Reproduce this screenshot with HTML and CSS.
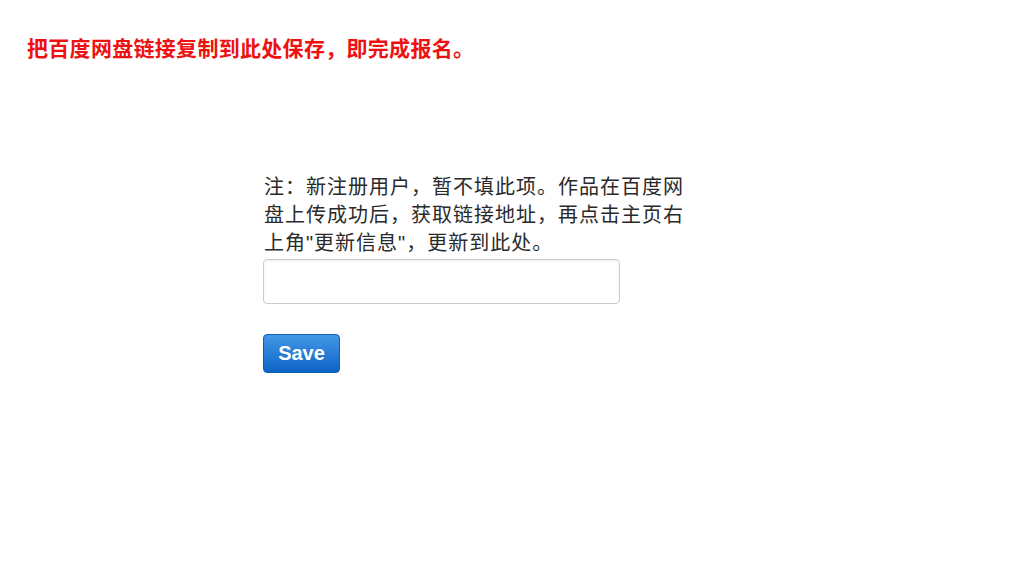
FILE: index.html
```html
<!DOCTYPE html>
<html lang="zh-CN">
<head>
    <meta charset="UTF-8">
    <meta name="viewport" content="width=device-width, initial-scale=1.0">
    <title>报名</title>
    <link rel="stylesheet" href="styles.css">
</head>
<body>
    <h1 class="notice">把百度网盘链接复制到此处保存，即完成报名。</h1>
    <div class="form-box">
        <p class="hint">注：新注册用户，暂不填此项。作品在百度网盘上传成功后，获取链接地址，再点击主页右上角"更新信息"，更新到此处。</p>
        <input type="text" class="link-input">
        <div class="actions">
            <button class="btn-save">Save</button>
        </div>
    </div>
</body>
</html>
```

FILE: styles.css
```css
body {
    margin: 0;
    padding: 0;
    background-color: #ffffff;
    font-family: "Liberation Sans", Arial, "Noto Sans CJK SC", sans-serif;
}
.notice {
    margin: 0;
    padding: 37px 0 0 27px;
    font-size: 21px;
    line-height: 24px;
    font-weight: bold;
    color: #ee1111;
    letter-spacing: 0.3px;
}
.form-box {
    width: 430px;
    margin: 112px 0 0 264px;
}
.hint {
    margin: 0;
    font-size: 20px;
    line-height: 28px;
    color: #2a2a2a;
    letter-spacing: 1px;
}
.link-input {
    display: block;
    width: 357px;
    height: 45px;
    margin-top: 2px;
    margin-left: -1px;
    border: 1px solid #cccccc;
    border-radius: 4px;
    box-shadow: inset 0 1px 2px rgba(0,0,0,0.08);
    box-sizing: border-box;
}
.actions {
    margin-top: 30px;
}
.btn-save {
    margin-left: -1px;
    width: 77px;
    height: 39px;
    padding: 0;
    border: 1px solid #0d5fb4;
    border-radius: 4px;
    background: linear-gradient(#4398e6, #0d63c6);
    color: #ffffff;
    font-family: "Liberation Sans", Arial, sans-serif;
    font-size: 20px;
    font-weight: bold;
    cursor: pointer;
}
```
